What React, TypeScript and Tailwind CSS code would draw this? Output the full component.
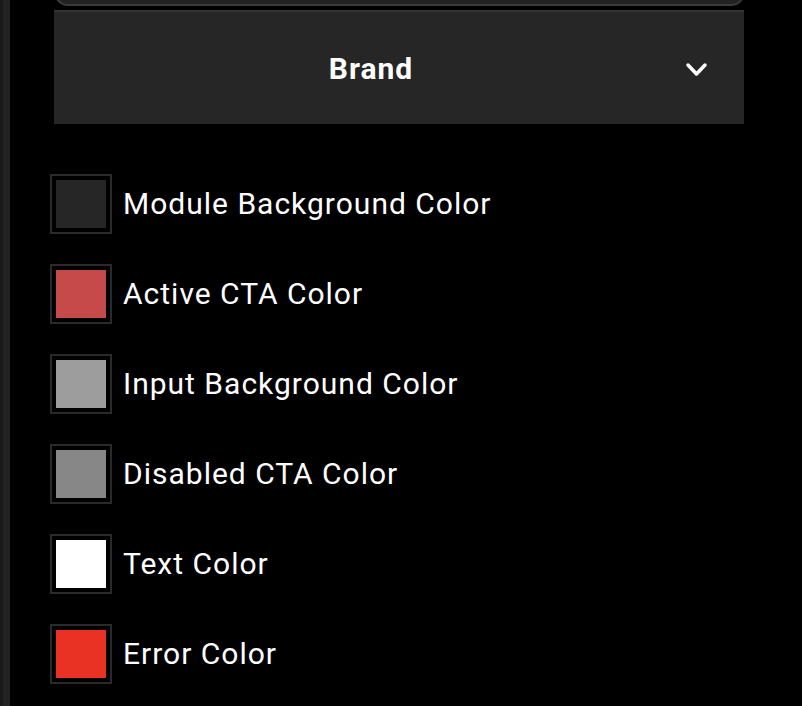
const COLORS = [
  { label: "Module Background Color", value: "#262626" },
  { label: "Active CTA Color", value: "#c64a4a" },
  { label: "Input Background Color", value: "#9d9d9d" },
  { label: "Disabled CTA Color", value: "#878787" },
  { label: "Text Color", value: "#ffffff" },
  { label: "Error Color", value: "#e93223" },
];

function Chevron() {
  return (
    <svg width="24" height="24" viewBox="0 0 24 24" fill="none">
      <polyline
        points="4,9 12.5,18 21,9"
        stroke="#fff"
        strokeWidth="3.5"
        strokeLinecap="round"
        strokeLinejoin="round"
      />
    </svg>
  );
}

export default function App() {
  return (
    <div
      className="flex h-[706px] w-[802px] overflow-hidden bg-black text-white"
      style={{ fontFamily: "Roboto, 'Liberation Sans', sans-serif" }}
    >
      {/* left rail */}
      <div className="h-full w-[10px] shrink-0 border-l-[3px] border-[#1a1a1a] bg-[#232323]" />

      <div className="flex w-[738px] flex-col pl-[44px]">
        {/* previous section, cut off */}
        <div className="-mt-[40px] h-[46px] w-[691px] rounded-b-[14px] border-2 border-[#3a3a3a] bg-[#222]" />

        {/* Brand header */}
        <div className="mt-[4px] flex h-[114px] w-[690px] items-center border-t-2 border-[#333] bg-[#262626] pl-[4px]">
          <span className="flex-1 text-center text-[30px] font-bold tracking-[1px]">Brand</span>
          <span className="mr-[36px] flex h-[24px] w-[24px] items-center justify-center">
            <Chevron />
          </span>
        </div>

        {/* colour pickers */}
        <div className="mt-[50px] flex flex-col gap-[30px]">
          {COLORS.map((c) => (
            <div key={c.label} className="-ml-[4px] flex items-center gap-[11px]">
              <div className="h-[60px] w-[62px] border-2 border-[#2a2a2a] p-[4px]">
                <div className="h-full w-full" style={{ background: c.value }} />
              </div>
              <span className="text-[30px] leading-none tracking-[1px]">{c.label}</span>
            </div>
          ))}
        </div>
      </div>
    </div>
  );
}
